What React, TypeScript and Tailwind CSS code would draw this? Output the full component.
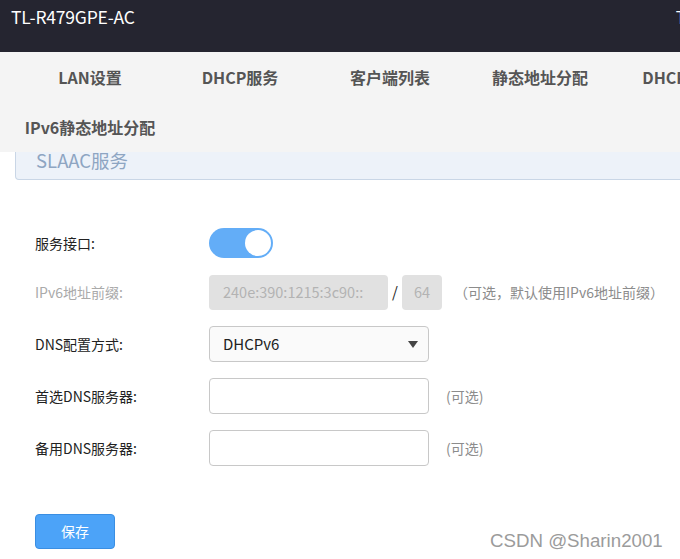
import React, { useState } from 'react';

const NAV_ITEMS = ['LAN设置', 'DHCP服务', '客户端列表', '静态地址分配', 'DHCPv6服务', 'IPv6静态地址分配'];

const cjk = "font-['Noto_Sans_CJK_SC','Noto_Sans',sans-serif]";

const Row = ({ label, muted = false, className = '', children }: any) => (
    <div className={`flex items-center h-[36px] ${className}`}>
        <div className={`w-[174px] text-[14px] ${muted ? 'text-[#aaaaaa]' : 'text-[#222222]'}`}>{label}</div>
        {children}
    </div>
);

const App: React.FC = () => {
    const [enabled, setEnabled] = useState(true);

    return (
        <div className={`relative w-[680px] h-[559px] overflow-hidden bg-white ${cjk}`}>
            {/* top bar */}
            <div className="h-[52px] bg-[#252530] flex items-start justify-between pl-[11px] pt-[4px]">
                <span className="text-white text-[17.5px] tracking-[-0.2px]">TL-R479GPE-AC</span>
                <span className="text-white text-[17px] -mr-[6px]">T</span>
            </div>

            {/* tabs */}
            <div className="h-[100px] bg-[#f4f4f4] overflow-hidden">
                <div className="ml-[15px] w-[760px] flex flex-wrap">
                    {NAV_ITEMS.map((item) => (
                        <div
                            key={item}
                            className="w-[150px] h-[50px] flex items-center justify-center text-[16px] font-bold text-[#555555] whitespace-nowrap"
                        >
                            {item}
                        </div>
                    ))}
                </div>
            </div>

            {/* section header */}
            <div className="ml-[15px] w-[700px] h-[28px] bg-[#edf2f9] border-x border-b border-[#c9d6e6] rounded-bl-[4px] flex items-center pl-[20px]">
                <span className="text-[18.5px] text-[#8ea5c2] -mt-[10px]">SLAAC服务</span>
            </div>

            {/* form */}
            <div className="pl-[35px] pt-[45px]">
                <Row label="服务接口:">
                    <button
                        onClick={() => setEnabled(!enabled)}
                        className={`w-[64px] h-[30px] rounded-full flex items-center px-[2px] ${enabled ? 'bg-[#63adf7] justify-end' : 'bg-[#cccccc] justify-start'}`}
                    >
                        <span className="w-[26px] h-[26px] rounded-full bg-white" />
                    </button>
                </Row>

                <Row label="IPv6地址前缀:" muted className="mt-[13px]">
                    <div className="w-[179px] h-[35px] rounded-[4px] bg-[#e1e1e1] flex items-center pl-[14px] text-[14.5px] text-[#b3b3b3]">
                        240e:390:1215:3c90::
                    </div>
                    <span className="w-[14px] text-center text-[15px] text-[#222222]">/</span>
                    <div className="w-[40px] h-[35px] rounded-[4px] bg-[#e1e1e1] flex items-center justify-center text-[14.5px] text-[#b3b3b3]">
                        64
                    </div>
                    <span className="ml-[12px] text-[14px] text-[#8c8c8c] whitespace-nowrap">（可选，默认使用IPv6地址前缀）</span>
                </Row>

                <Row label="DNS配置方式:" className="mt-[16px]">
                    <div className="w-[220px] h-[36px] rounded-[4px] border border-[#c8c8c8] bg-[#fafafa] flex items-center justify-between pl-[13px] pr-[10px] text-[15px] text-[#222222]">
                        <span>DHCPv6</span>
                        <span className="w-0 h-0 border-l-[5px] border-r-[5px] border-t-[7px] border-l-transparent border-r-transparent border-t-[#444444]" />
                    </div>
                </Row>

                <Row label="首选DNS服务器:" className="mt-[16px]">
                    <div className="w-[220px] h-[36px] rounded-[4px] border border-[#c8c8c8] bg-white" />
                    <span className="ml-[17px] text-[14px] text-[#8c8c8c]">(可选)</span>
                </Row>

                <Row label="备用DNS服务器:" className="mt-[16px]">
                    <div className="w-[220px] h-[36px] rounded-[4px] border border-[#c8c8c8] bg-white" />
                    <span className="ml-[17px] text-[14px] text-[#8c8c8c]">(可选)</span>
                </Row>

                <button className="mt-[48px] w-[80px] h-[35px] rounded-[4px] bg-[#4ca3f8] border border-[#3a8ee2] text-white text-[14px]">
                    保存
                </button>
            </div>

            {/* watermark */}
            <div className="absolute left-[490px] top-[527px] text-[18.7px] text-[#9b9b9b] font-['Liberation_Sans',sans-serif]">
                CSDN @Sharin2001
            </div>
        </div>
    );
};

export default App;
